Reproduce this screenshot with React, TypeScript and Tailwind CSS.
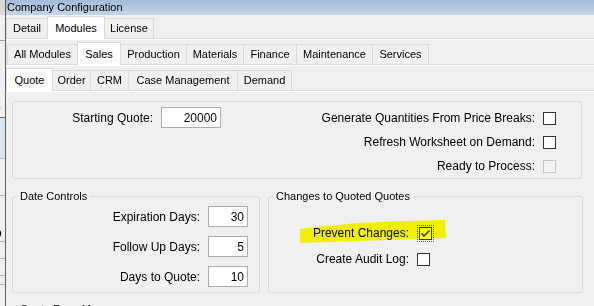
import React from "react";

type Tab = { label: string; w: string };

const moduleTabs: Tab[] = [
  { label: "Detail", w: "w-[42px]" },
  { label: "Modules", w: "w-[58px]" },
  { label: "License", w: "w-[50px]" },
];

const salesTabs: Tab[] = [
  { label: "All Modules", w: "w-[71px]" },
  { label: "Sales", w: "w-[44px]" },
  { label: "Production", w: "w-[67px]" },
  { label: "Materials", w: "w-[58px]" },
  { label: "Finance", w: "w-[54px]" },
  { label: "Maintenance", w: "w-[77px]" },
  { label: "Services", w: "w-[57px]" },
];

const quoteTabs: Tab[] = [
  { label: "Quote", w: "w-[47px]" },
  { label: "Order", w: "w-[39px]" },
  { label: "CRM", w: "w-[39px]" },
  { label: "Case Management", w: "w-[110px]" },
  { label: "Demand", w: "w-[55px]" },
];

function TabStrip({ tabs, active, className = "" }: { tabs: Tab[]; active: string; className?: string }) {
  return (
    <div>
      <div className={"flex items-end h-[23px] border-b border-[#d9d9d9] " + className}>
        {tabs.map((t, i) => (
          <div
            key={t.label}
            className={
              "flex items-center justify-center border border-b-0 border-[#d9d9d9] text-[11px] text-black " +
              t.w +
              (i > 0 ? " -ml-px" : "") +
              (t.label === active ? " relative z-10 h-[23px] -mb-px bg-white" : " h-[20px] bg-[#f0f0f0]")
            }
          >
            {t.label}
          </div>
        ))}
      </div>
      <div className="h-px bg-white" />
    </div>
  );
}

function CheckBox({ checked = false, disabled = false }: { checked?: boolean; disabled?: boolean }) {
  return (
    <div
      className={
        "w-[13px] h-[13px] border flex items-center justify-center shrink-0 " +
        (disabled ? "border-[#c6c6c6] bg-[#f3f3f3]" : "border-[#333333] bg-white")
      }
    >
      {checked && (
        <svg width="11" height="11" viewBox="0 0 11 11">
          <polyline points="1.5,5.5 4,8 9.5,2.5" fill="none" stroke="#333333" strokeWidth="1.5" />
        </svg>
      )}
    </div>
  );
}

function NumBox({ value, w }: { value: string; w: string }) {
  return (
    <div className={"h-[21px] bg-white border border-[#ababab] flex items-center justify-end pr-[3px] text-[12px] " + w}>
      {value}
    </div>
  );
}

function BackWindow() {
  // sliver of the window behind, on the left edge
  return (
    <div className="w-[5px] shrink-0 flex flex-col bg-[#f0f0f0] overflow-hidden">
      <div className="h-[15px] bg-[#dadada]" />
      <div className="h-[25px]" />
      <div className="h-px bg-[#a0a0a0]" />
      <div className="h-[69px] flex items-end text-[12px] leading-[12px] -ml-[3px]">t</div>
      <div className="h-[7px]" />
      <div className="h-px bg-[#6d6d6d]" />
      <div className="h-[40px] bg-[#dce6f0]" />
      <div className="h-px bg-[#b5b5b5]" />
      <div className="h-[36px]" />
      <div className="h-px bg-[#b5b5b5]" />
      <div className="h-[30px]" />
      <div className="h-[15px] text-[12px] leading-[15px] -ml-[5px]">o</div>
      <div className="h-px bg-[#b5b5b5]" />
      <div className="h-[16px]" />
      <div className="h-px bg-[#b5b5b5]" />
      <div className="h-[16px]" />
      <div className="h-px bg-[#b5b5b5]" />
      <div className="h-[8px]" />
      <div className="h-px bg-[#b5b5b5]" />
    </div>
  );
}

export default function App() {
  return (
    <div className="w-[594px] h-[306px] overflow-hidden flex bg-[#f0f0f0] text-black font-['Liberation_Sans',Arial,sans-serif]">
      <BackWindow />
      <div className="w-px shrink-0 bg-[#5c5c5c]" />
      <div className="flex-1 flex flex-col min-w-0">
        <div className="h-[15px] bg-linear-to-b from-[#a3bcda] to-[#c4d6ea] pl-[1px] text-[11px] leading-[15px]">
          Company Configuration
        </div>

        <div className="mt-px">
          <TabStrip tabs={moduleTabs} active="Modules" />
        </div>
        <div className="mt-[2px]">
          <TabStrip tabs={salesTabs} active="Sales" className="pl-px" />
        </div>
        <div className="mt-[2px]">
          <TabStrip tabs={quoteTabs} active="Quote" />
        </div>

        {/* Quote page */}
        <div className="mt-[9px] ml-[6px] w-[570px] h-[81px] border border-[#d5dde3] rounded-[3px] flex justify-between">
          <div className="mt-[5px] flex items-center h-[21px] text-[12px]">
            <div className="w-[140px] text-right">Starting Quote:</div>
            <div className="ml-[8px]">
              <NumBox value="20000" w="w-[60px]" />
            </div>
          </div>
          <div className="pt-[4px] pr-[25px] flex flex-col text-[12px]">
            {[
              { l: "Generate Quantities From Price Breaks:", d: false },
              { l: "Refresh Worksheet on Demand:", d: false },
              { l: "Ready to Process:", d: true },
            ].map((r) => (
              <div key={r.l} className="h-[24px] flex items-center justify-end gap-[8px]">
                <span>{r.l}</span>
                <CheckBox disabled={r.d} />
              </div>
            ))}
          </div>
        </div>

        <div className="mt-[11px] ml-[6px] flex">
          <fieldset className="w-[248px] h-[103px] border border-[#d5dde3] rounded-[3px]">
            <legend className="ml-[4px] px-[3px] text-[11px] leading-[13px]">Date Controls</legend>
            <div className="pt-[3px] pr-[11px] flex flex-col gap-[9px] text-[12px]">
              {[
                { l: "Expiration Days:", v: "30" },
                { l: "Follow Up Days:", v: "5" },
                { l: "Days to Quote:", v: "10" },
              ].map((r) => (
                <div key={r.l} className="flex items-center justify-end gap-[8px]">
                  <span>{r.l}</span>
                  <NumBox value={r.v} w="w-[40px]" />
                </div>
              ))}
            </div>
          </fieldset>

          <fieldset className="ml-[8px] w-[315px] h-[103px] border border-[#d5dde3] rounded-[3px]">
            <legend className="ml-[4px] px-[3px] text-[11px] leading-[13px]">Changes to Quoted Quotes</legend>
            <div className="pt-[17px] flex flex-col text-[12px]">
              <div className="relative h-[26px] flex items-center">
                <span className="w-[140px] text-right">Prevent Changes:</span>
                <div className="ml-[8px] -m-[2px] p-px border border-dotted border-[#2d62a8]">
                  <CheckBox checked />
                </div>
                <svg
                  className="absolute left-[31px] top-0 mix-blend-multiply pointer-events-none"
                  width="148"
                  height="26"
                  viewBox="0 0 148 26"
                >
                  <polygon points="0,9 27,6 57,3 103,1 145,0 146,18 60,21 0,23" fill="#ffff00" />
                </svg>
              </div>
              <div className="h-[26px] flex items-center">
                <span className="w-[140px] text-right">Create Audit Log:</span>
                <div className="ml-[8px]">
                  <CheckBox />
                </div>
              </div>
            </div>
          </fieldset>
        </div>

        <fieldset className="mt-[10px] ml-[6px] w-[570px] h-[40px] border border-[#d5dde3] rounded-[3px]">
          <legend className="ml-[4px] px-[3px] text-[11px] leading-[13px]">Quote Form Messages</legend>
        </fieldset>
      </div>
    </div>
  );
}
